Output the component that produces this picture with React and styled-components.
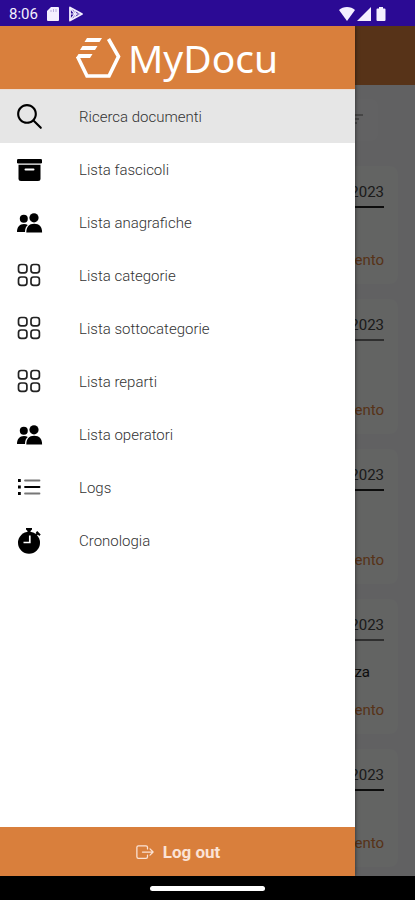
import React from "react";
import styled, { createGlobalStyle } from "styled-components";
import { IoIosSearch } from "react-icons/io";
import { IoExitOutline } from "react-icons/io5";

const GlobalStyle = createGlobalStyle`
  * { box-sizing: border-box; }
  body { margin: 0; background: #000; font-family: Roboto, "Liberation Sans", sans-serif; }
  button { font: inherit; border: 0; cursor: pointer; }
`;

const Phone = styled.div`
  display: flex;
  flex-direction: column;
  height: 100vh;
  overflow: hidden;
`;

const StatusBar = styled.div`
  display: flex;
  align-items: center;
  gap: 9px;
  flex: none;
  height: 26px;
  padding: 2px 28px 0 9px;
  background: #2b0a94;
  color: #f4f0ff;
  font-size: 15px;
  line-height: 24px;
`;

const StatusIcons = styled.div`
  display: flex;
  align-items: center;
  gap: 2px;
  margin-left: auto;
`;

const Viewport = styled.div`
  position: relative;
  flex: 1;
  min-height: 0;
  overflow: hidden;
`;

const Page = styled.main`
  height: 100%;
  background: #f2f2f6;
  overflow: hidden;
`;

const PageHeader = styled.header`
  height: 59px;
  background: #d97f3c;
`;

const FilterBar = styled.div`
  display: flex;
  justify-content: flex-end;
  height: 42px;
  margin: 14px 37px 25px 17px;
  padding: 15px 14px 0;
  border-radius: 8px;
  background: #f6f6f7;
  color: #999;
`;

const CardList = styled.div`
  display: flex;
  flex-direction: column;
  gap: 15px;
  padding: 0 17px;
`;

const Card = styled.article`
  display: flex;
  flex-direction: column;
  flex: none;
  height: ${(p) => (p.$compact ? 118 : 135)}px;
  padding: 16px 14px 14px;
  border-radius: 8px;
  background: #f7f9f7;
  color: #444;
  font-size: 15px;
  line-height: 20px;
  text-align: right;
`;

const CardDate = styled.div`
  padding-bottom: 4px;
  border-bottom: 2px solid ${(p) => (p.$soft ? "#777" : "#222")};
`;

const CardNote = styled.div`
  margin-top: 21px;
  padding-right: 14px;
  color: #222;
`;

const CardLink = styled.a`
  margin-top: auto;
  color: #d97f3c;
  text-decoration: none;
`;

const Scrim = styled.div`
  position: absolute;
  inset: 0;
  background: rgba(0, 0, 0, 0.6);
`;

const Drawer = styled.aside`
  position: absolute;
  inset: 0 60px 0 0;
  display: flex;
  flex-direction: column;
  background: #fff;
  box-shadow: 0 0 4px rgba(0, 0, 0, 0.6);
`;

const Brand = styled.header`
  display: flex;
  align-items: center;
  justify-content: center;
  gap: 7px;
  flex: none;
  height: 64px;
  padding-right: 2px;
  border-bottom: 1px solid #ecdcd2;
  background: #d97f3c;
  color: #fff;
  font-family: "Noto Sans", sans-serif;
  font-size: 39px;
  line-height: 56px;
`;

const Menu = styled.nav`
  display: flex;
  flex-direction: column;
  flex: 1;
`;

const MenuItem = styled.button`
  display: flex;
  align-items: center;
  gap: 36px;
  height: 53px;
  padding: 0 16px;
  background: ${(p) => (p.$active ? "#e6e6e6" : "transparent")};
  color: #333;
  font-size: 15px;
  font-weight: 300;
  line-height: 20px;
  text-align: left;

  svg {
    flex: none;
    color: #000;
  }
`;

const IconSlot = styled.span`
  display: flex;
  align-items: center;
  justify-content: center;
  width: 27px;
  height: 27px;
`;

const Logout = styled.button`
  display: flex;
  align-items: center;
  justify-content: center;
  gap: 8px;
  flex: none;
  height: 49px;
  padding: 0;
  background: #d97f3c;
  color: #fbe3d6;
  font-size: 17px;
  font-weight: 700;
  line-height: 24px;
`;

const NavigationBar = styled.div`
  display: flex;
  align-items: center;
  justify-content: center;
  flex: none;
  height: 24px;
  background: #000;
`;

const HomeHandle = styled.div`
  width: 115px;
  height: 5px;
  border-radius: 3px;
  background: #fff;
`;

const SdCard = () => (
  <svg width="12" height="14" viewBox="0 0 12 14" fill="currentColor" aria-hidden="true">
    <path d="M4 0h7a1 1 0 0 1 1 1v12a1 1 0 0 1-1 1H1a1 1 0 0 1-1-1V4z" />
    <path d="M4 3v2M6.500 2v3M9 2v3" stroke="#b9b0dc" />
  </svg>
);

const PlayBadge = () => (
  <svg width="16" height="16" viewBox="0 0 16 16" fill="none" stroke="currentColor" strokeWidth="1.800" strokeLinejoin="round" aria-hidden="true">
    <path d="M2 1.500 14 8 2 14.500z" />
    <path d="M2 2l5 6-5 6M6 4l2.500 4L6 12M2 8h11" strokeWidth="1.200" />
  </svg>
);

const Wifi = () => (
  <svg width="16" height="14" viewBox="0 0 16 14" fill="currentColor" aria-hidden="true">
    <path d="M0 3C4-1 12-1 16 3L8 14z" />
  </svg>
);

const Signal = () => (
  <svg width="14" height="14" viewBox="0 0 14 14" fill="currentColor" aria-hidden="true">
    <path d="M14 0v14H0z" />
  </svg>
);

const Battery = () => (
  <svg width="14" height="14" viewBox="0 0 14 14" fill="currentColor" aria-hidden="true">
    <path d="M6 0h4v1.500h1.500a1 1 0 0 1 1 1V13a1 1 0 0 1-1 1h-7a1 1 0 0 1-1-1V2.500a1 1 0 0 1 1-1H6z" />
  </svg>
);

const Logo = () => (
  <svg width="46" height="42" viewBox="0 0 46 42" fill="none" aria-hidden="true">
    <path d="M12 1h15l-2.500 4H9.500zM7.500 9h15L20 13H5zM3.500 17h14L15 21H1z" fill="#fff" />
    <path d="M2.500 19.500 12 39h22l9.500-19.500L33.500 2" stroke="#fff" strokeWidth="3.600" />
  </svg>
);

const Archive = () => (
  <svg width="27" height="24" viewBox="0 0 27 24" aria-hidden="true">
    <rect x="1" y="1" width="25" height="4.500" rx="1.300" fill="#000" />
    <path d="M2.500 6.800h22v13.700a2.500 2.500 0 0 1-2.500 2.500H5a2.500 2.500 0 0 1-2.500-2.500z" fill="#000" />
    <rect x="8.500" y="10.500" width="10" height="2" rx="1" fill="#fff" />
  </svg>
);

const People = () => (
  <svg width="27" height="20" viewBox="0 0 27 20" fill="currentColor" aria-hidden="true">
    <circle cx="7.800" cy="5.800" r="4" />
    <circle cx="18" cy="4.800" r="4.600" />
    <path d="M1 19c0-5 2.500-8 7-8 1.500 0 2.800.3 3.800 1C10 13.500 9 15.500 9 19z" />
    <path d="M10.300 19.500c0-5.500 2.700-8.700 7.900-8.700s7.900 3.200 7.900 8.700z" />
  </svg>
);

const Grid = () => (
  <svg width="25" height="25" viewBox="0 0 25 25" fill="none" stroke="#222" strokeWidth="1.700" aria-hidden="true">
    <rect x="1.500" y="1.500" width="8.400" height="8.400" rx="2.600" />
    <rect x="14" y="1.500" width="8.400" height="8.400" rx="2.600" />
    <rect x="1.500" y="14" width="8.400" height="8.400" rx="2.600" />
    <rect x="14" y="14" width="8.400" height="8.400" rx="2.600" />
  </svg>
);

const List = () => (
  <svg width="25" height="20" viewBox="0 0 25 20" fill="none" aria-hidden="true">
    <path d="M8 2.500h14.500M8 15.500h14.500" stroke="#777" strokeWidth="1.800" strokeLinecap="round" />
    <path d="M8 9h14.500" stroke="#000" strokeWidth="1.800" strokeLinecap="round" />
    <path d="M1 2.500h2.800M1 9h2.800M1 15.500h2.800" stroke="#000" strokeWidth="2.800" />
  </svg>
);

const Stopwatch = () => (
  <svg width="25" height="26" viewBox="0 0 25 26" aria-hidden="true">
    <circle cx="12" cy="14.700" r="11" fill="#000" />
    <path d="M9 0h6v1.500L13.500 3v2h-3V3L9 1.500z" fill="#000" />
    <path d="m19 7 2-2M19.500 3.800l3.500 3.500" stroke="#000" strokeWidth="2" />
    <path d="M12.800 7.500v7H6.500" stroke="#fff" strokeWidth="1.700" fill="none" />
  </svg>
);

const Filter = () => (
  <svg width="16" height="14" viewBox="0 0 16 14" fill="none" stroke="currentColor" strokeWidth="1.500" aria-hidden="true">
    <path d="M0 1h15M2 5h9M6 9h3" />
  </svg>
);

const menu = [
  { label: "Ricerca documenti", icon: <IoIosSearch size={33} />, active: true },
  { label: "Lista fascicoli", icon: <Archive /> },
  { label: "Lista anagrafiche", icon: <People /> },
  { label: "Lista categorie", icon: <Grid /> },
  { label: "Lista sottocategorie", icon: <Grid /> },
  { label: "Lista reparti", icon: <Grid /> },
  { label: "Lista operatori", icon: <People /> },
  { label: "Logs", icon: <List /> },
  { label: "Cronologia", icon: <Stopwatch /> },
];

const documents = [
  { id: 1, compact: true },
  { id: 2, soft: true },
  { id: 3 },
  { id: 4, soft: true, note: "za" },
  { id: 5, compact: true },
];

export default function App() {
  return (
    <Phone>
      <GlobalStyle />
      <StatusBar>
        <time>8:06</time>
        <SdCard />
        <PlayBadge />
        <StatusIcons>
          <Wifi />
          <Signal />
          <Battery />
        </StatusIcons>
      </StatusBar>
      <Viewport>
        <Page>
          <PageHeader />
          <FilterBar><Filter /></FilterBar>
          <CardList>
            {documents.map((d) => (
              <Card key={d.id} $compact={d.compact}>
                <CardDate $soft={d.soft}>2023</CardDate>
                {d.note && <CardNote>{d.note}</CardNote>}
                <CardLink href="#documento">Documento</CardLink>
              </Card>
            ))}
          </CardList>
        </Page>
        <Scrim />
        <Drawer>
          <Brand>
            <Logo />
            <span>MyDocu</span>
          </Brand>
          <Menu>
            {menu.map((m) => (
              <MenuItem key={m.label} $active={m.active}>
                <IconSlot>{m.icon}</IconSlot>
                {m.label}
              </MenuItem>
            ))}
          </Menu>
          <Logout>
            <IoExitOutline size={20} />
            Log out
          </Logout>
        </Drawer>
      </Viewport>
      <NavigationBar>
        <HomeHandle />
      </NavigationBar>
    </Phone>
  );
}
